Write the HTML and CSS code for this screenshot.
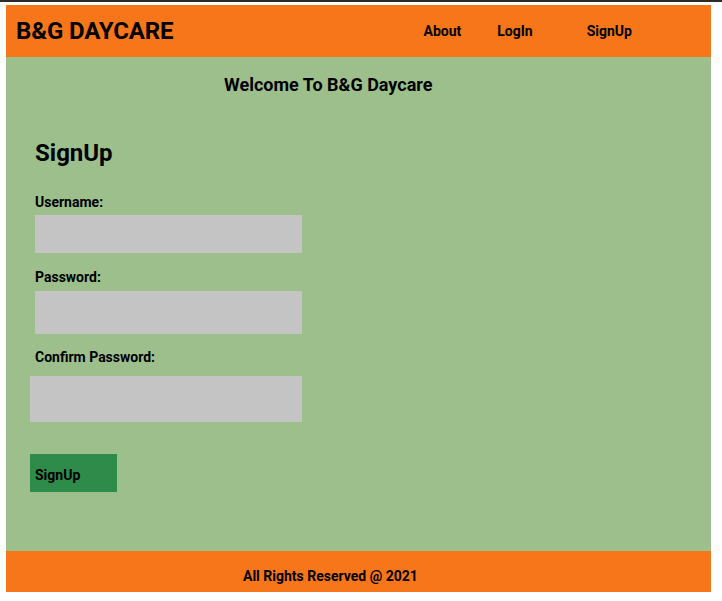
FILE: index.html
```html
<!DOCTYPE html>
<html>
<head>
<meta charset="utf-8">
<link rel="stylesheet" href="styles.css">
</head>
<body>
<div class="page">
  <header class="header">
    <div class="brand">B&amp;G DAYCARE</div>
    <nav class="nav">
      <a class="nav-about">About</a>
      <a class="nav-login">LogIn</a>
      <a class="nav-signup">SignUp</a>
    </nav>
  </header>
  <main class="main">
    <h3 class="welcome">Welcome To B&amp;G Daycare</h3>
    <section class="form">
      <h2 class="form-title">SignUp</h2>
      <label class="label">Username:</label>
      <div class="input input-user"></div>
      <label class="label label-pass">Password:</label>
      <div class="input input-pass"></div>
      <label class="label label-confirm">Confirm Password:</label>
      <div class="input input-confirm"></div>
      <div class="button">SignUp</div>
    </section>
  </main>
  <footer class="footer">All Rights Reserved @ 2021</footer>
</div>
</body>
</html>
```

FILE: styles.css
```css
html, body { margin: 0; padding: 0; background: #fff; }
body {
  border-top: 2px solid #2b2b2b;
  font-family: Roboto, "Liberation Sans", sans-serif;
  color: #000;
}
.page {
  width: 705px;
  margin: 3px 0 0 6px;
  display: flex;
  flex-direction: column;
}
.header {
  background: #f7761a;
  height: 52px;
  display: flex;
  align-items: center;
}
.brand {
  font-size: 24px;
  font-weight: 700;
  margin-left: 10px;
  letter-spacing: -0.1px;
}
.nav {
  display: flex;
  margin-left: 250px;
  font-size: 14px;
  font-weight: 700;
}
.nav a { display: block; }
.nav-login { margin-left: 36px; }
.nav-signup { margin-left: 54px; }
.main {
  background: #9cbf8c;
  height: 494px;
  display: flex;
  flex-direction: column;
}
.welcome {
  margin: 17px 0 0 218px;
  font-size: 18px;
  font-weight: 700;
  line-height: 22px;
}
.form {
  display: flex;
  flex-direction: column;
  align-items: flex-start;
  padding-left: 24px;
}
.form-title {
  margin: 43px 0 0 5px;
  font-size: 24px;
  font-weight: 700;
  line-height: 28px;
}
.label {
  margin: 27px 0 0 5px;
  font-size: 14px;
  font-weight: 700;
  line-height: 16px;
}
.input { background: #c4c4c4; margin-left: 5px; width: 267px; }
.input-user { margin-top: 5px; height: 38px; }
.label-pass { margin-top: 16px; }
.input-pass { margin-top: 6px; height: 43px; }
.label-confirm { margin-top: 15px; }
.input-confirm { margin-top: 11px; margin-left: 0; width: 272px; height: 46px; }
.button {
  margin-top: 32px;
  width: 87px;
  height: 38px;
  background: #2e8b4a;
  font-size: 14px;
  font-weight: 700;
  line-height: 16px;
  padding: 13px 0 0 5px;
  box-sizing: border-box;
}
.footer {
  background: #f7761a;
  height: 41px;
  box-sizing: border-box;
  padding: 17px 0 0 237px;
  font-size: 14px;
  font-weight: 700;
  line-height: 16px;
}
```
